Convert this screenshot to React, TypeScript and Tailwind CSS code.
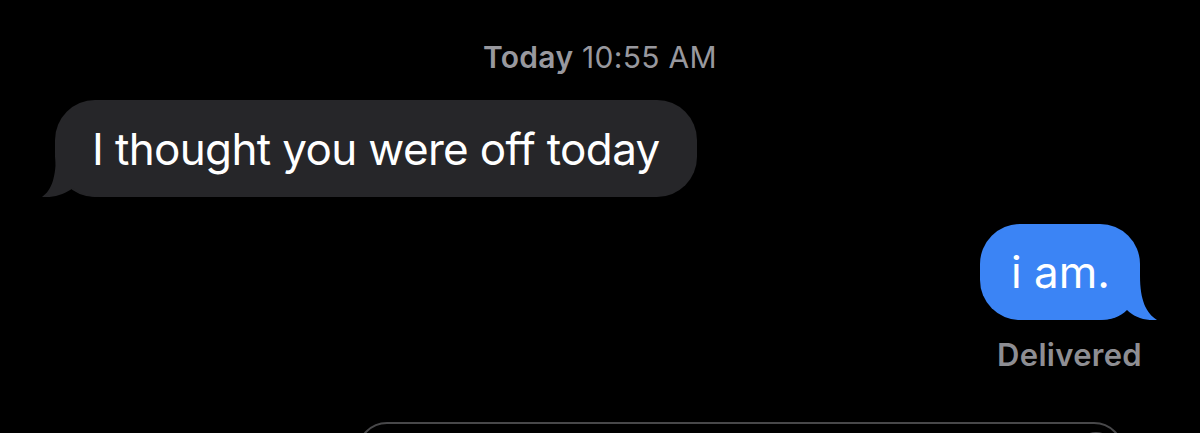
export default function App() {
  return (
    <div
      className="relative flex h-[433px] w-[1200px] flex-col overflow-hidden bg-black text-white [font-feature-settings:'liga'_0,'calt'_0] [font-variant-ligatures:none]"
      style={{ fontFamily: "Inter, 'Noto Sans', sans-serif" }}
    >
      {/* timestamp */}
      <div className="mt-[40px] shrink-0 text-center text-[30px] leading-[34px] tracking-[0.3px] text-[#98989e]">
        <span className="font-semibold">Today</span> <span>10:55 AM</span>
      </div>

      {/* incoming message */}
      <div className="relative ml-[55px] mt-[26px] flex h-[97px] w-fit shrink-0 items-center rounded-[40px] bg-[#262629] pl-[37px] pr-[37px]">
        <svg
          className="absolute bottom-0 left-[-13px]"
          width="64"
          height="44"
          viewBox="0 0 64 44"
        >
          <path
            d="M14 0 C14 24 10 37 0 44 C12 45 23 41 31 35 C38 41 47 44 58 44 L64 44 L64 0 Z"
            fill="#262629"
          />
        </svg>
        <span className="relative text-[44px] leading-none tracking-[-0.65px]">
          I thought you were off today
        </span>
      </div>

      {/* outgoing message */}
      <div className="relative mr-[60px] mt-[27px] flex h-[96px] shrink-0 items-center self-end rounded-[40px] bg-[#3b84f5] pl-[31px] pr-[30px]">
        <svg
          className="absolute bottom-0 right-[-17px]"
          width="64"
          height="44"
          viewBox="0 0 64 44"
        >
          <path
            d="M47 0 C47 24 53 37 64 44 C52 45 41 41 34 34 C27 41 18 44 6 44 L0 44 L0 0 Z"
            fill="#3b84f5"
          />
        </svg>
        <span className="relative text-[44px] leading-none">i am.</span>
      </div>

      {/* delivery status */}
      <div className="mr-[58px] mt-[18px] shrink-0 self-end text-[31px] font-semibold leading-[34px] tracking-[0.3px] text-[#8e8e93]">
        Delivered
      </div>

      {/* compose field */}
      <div className="relative ml-[357px] mt-[50px] h-[60px] w-[767px] shrink-0 rounded-[36px] border-2 border-[#48484a]">
        <div className="absolute right-[6px] top-[8px] h-[40px] w-[40px] rounded-full border-2 border-[#48484a]" />
      </div>
    </div>
  );
}
